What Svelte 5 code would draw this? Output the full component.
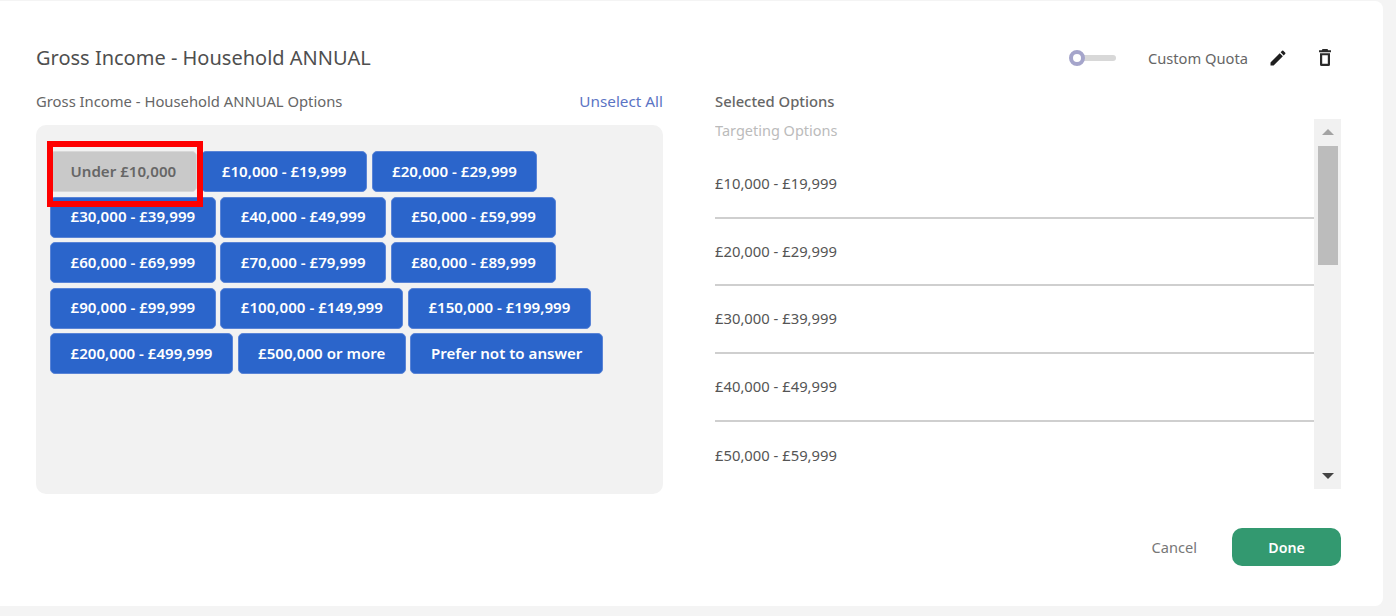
<script lang="ts">
  const options = [
    'Under £10,000', '£10,000 - £19,999', '£20,000 - £29,999', '£30,000 - £39,999',
    '£40,000 - £49,999', '£50,000 - £59,999', '£60,000 - £69,999', '£70,000 - £79,999',
    '£80,000 - £89,999', '£90,000 - £99,999', '£100,000 - £149,999', '£150,000 - £199,999',
    '£200,000 - £499,999', '£500,000 or more', 'Prefer not to answer'
  ];
  const selected = options.slice(1, 6);
</script>

<div class="card">
  <header>
    <h1>Gross Income - Household ANNUAL</h1>
    <div class="tools">
      <span class="toggle"><span class="knob"></span></span>
      <span class="quota">Custom Quota</span>
      <svg class="pencil" viewBox="0 0 24 24" width="20" height="20" aria-hidden="true">
        <path d="M3 17.25V21h3.75L17.81 9.94l-3.75-3.75L3 17.25zM20.71 7.04a1 1 0 0 0 0-1.41l-2.34-2.34a1 1 0 0 0-1.41 0l-1.83 1.83 3.75 3.75 1.83-1.83z" />
      </svg>
      <svg class="trash" viewBox="0 0 12 17" width="12" height="17" aria-hidden="true">
        <path fill-rule="evenodd" d="M3.500 0h5l.7 1.200H12v2.100H0V1.200h2.800zM1 4.300h10v11.200A1.500 1.500 0 0 1 9.500 17h-7A1.500 1.500 0 0 1 1 15.500zm2.200 2v8.500h5.600V6.300z" />
      </svg>
    </div>
  </header>

  <div class="columns">
    <section>
      <div class="label-row">
        <span>Gross Income - Household ANNUAL Options</span>
        <span class="unselect">Unselect All</span>
      </div>
      <div class="panel">
        {#each options as option, i}
          <button class:off={i === 0}>{option}</button>
        {/each}
        <div class="highlight"></div>
      </div>
    </section>

    <section>
      <div class="label-row selected-label"><span>Selected Options</span></div>
      <div class="selected">
        <div class="list">
          <div class="hint">Targeting Options</div>
          {#each selected as item}
            <div class="row">{item}</div>
          {/each}
        </div>
        <div class="scrollbar">
          <span class="arrow up"></span>
          <span class="thumb"></span>
          <span class="arrow down"></span>
        </div>
      </div>
    </section>
  </div>

  <footer>
    <span class="cancel">Cancel</span>
    <button class="done">Done</button>
  </footer>
</div>

<style>
  :global(body) {
    background: #f4f4f4;
    font-family: "Noto Sans", sans-serif;
  }

  .card {
    box-sizing: border-box;
    width: 1383px;
    height: 605px;
    margin-top: 1px;
    padding: 40.5px 42px 0 36px;
    background: #fff;
    border-radius: 0 8px 8px 0;
    color: #555;
  }

  header {
    display: flex;
    justify-content: space-between;
    align-items: center;
    height: 32px;
  }

  h1 {
    margin: 0;
    font-size: 20px;
    font-weight: 400;
    color: #4f4f4f;
  }

  .tools {
    display: flex;
    align-items: center;
    font-size: 14.7px;
  }

  .toggle {
    position: relative;
    width: 46px;
    height: 6px;
    background: #d8d8d8;
    border-radius: 3px;
  }

  .knob {
    position: absolute;
    left: -1px;
    top: -5px;
    box-sizing: border-box;
    width: 16px;
    height: 16px;
    border: 4px solid #a5a5cb;
    border-radius: 50%;
    background: #fff;
  }

  .quota {
    margin-left: 32px;
    color: #666;
  }

  .pencil {
    margin-left: 20px;
    fill: #1f1f1f;
  }

  .trash {
    margin: 0 10px 0 31px;
    fill: #2a2a2a;
  }

  .columns {
    display: grid;
    grid-template-columns: 627px 626px;
    gap: 52px;
    margin-top: 15px;
  }

  .label-row {
    display: flex;
    justify-content: space-between;
    align-items: center;
    height: 24px;
    font-size: 14.8px;
    color: #666;
  }

  .unselect {
    font-size: 15.3px;
    color: #5b74c4;
  }

  .panel {
    position: relative;
    display: flex;
    flex-wrap: wrap;
    align-content: flex-start;
    gap: 4.6px;
    box-sizing: border-box;
    height: 369px;
    margin-top: 12.5px;
    padding: 26px 14px;
    background: #f2f2f2;
    border-radius: 10px;
  }

  button {
    height: 41px;
    padding: 0 19.5px 2px;
    border: 1px solid #5a84d6;
    border-radius: 5px;
    background: #2b65cb;
    color: #fff;
    font-family: inherit;
    font-size: 15.1px;
    font-weight: 600;
  }

  button.off {
    background: #c9c9c9;
    border-color: #d8d8d8;
    color: #666;
  }

  .highlight {
    position: absolute;
    left: 11px;
    top: 16px;
    box-sizing: border-box;
    width: 156px;
    height: 66px;
    border: 6px solid #fe0000;
  }

  .selected-label {
    font-weight: 500;
  }

  .selected {
    display: flex;
    height: 370px;
    margin-top: 6.5px;
  }

  .list {
    flex: 1;
    overflow: hidden;
    font-size: 14.8px;
  }

  .hint {
    height: 32px;
    line-height: 23px;
    font-size: 14.5px;
    color: #bbb;
  }

  .row {
    display: flex;
    align-items: center;
    box-sizing: border-box;
    height: 67.7px;
    padding-bottom: 2px;
    border-bottom: 2px solid #cfcfcf;
    color: #555;
  }

  .row:last-child {
    border-bottom: none;
  }

  .scrollbar {
    display: flex;
    flex-direction: column;
    align-items: center;
    width: 27px;
    background: #f1f1f1;
  }

  .arrow {
    width: 0;
    height: 0;
    border-left: 6px solid transparent;
    border-right: 6px solid transparent;
  }

  .arrow.up {
    margin-top: 10px;
    border-bottom: 6px solid #a3a3a3;
  }

  .arrow.down {
    margin-top: auto;
    margin-bottom: 10px;
    border-top: 6px solid #444;
  }

  .thumb {
    width: 20px;
    height: 119px;
    margin-top: 11px;
    background: #bcbcbc;
  }

  footer {
    display: flex;
    justify-content: flex-end;
    align-items: center;
    gap: 35px;
    margin-top: 34px;
  }

  .cancel {
    font-size: 14.6px;
    color: #777;
  }

  .done {
    width: 109px;
    height: 38px;
    padding: 0;
    border: none;
    border-radius: 10px;
    background: #339970;
    font-size: 14.2px;
  }
</style>
